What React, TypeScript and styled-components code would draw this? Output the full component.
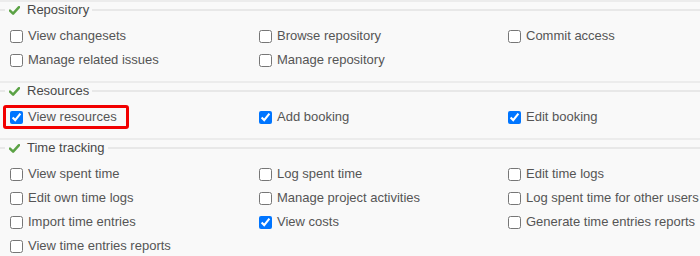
import { FC } from "react"
import styled, { createGlobalStyle } from "styled-components"

const GlobalStyle = createGlobalStyle`
  html, body {
    margin: 0;
    padding: 0;
    background: #f9f9f9;
  }
  body {
    font-family: "Liberation Sans", Arial, sans-serif;
    font-size: 13px;
    color: #555555;
  }
`

interface IPermission {
  label: string
  checked?: boolean
  highlight?: boolean
}

interface IGroup {
  title: string
  permissions: IPermission[]
}

const groups: IGroup[] = [
  {
    title: "Repository",
    permissions: [
      { label: "View changesets" },
      { label: "Browse repository" },
      { label: "Commit access" },
      { label: "Manage related issues" },
      { label: "Manage repository" },
    ],
  },
  {
    title: "Resources",
    permissions: [
      { label: "View resources", checked: true, highlight: true },
      { label: "Add booking", checked: true },
      { label: "Edit booking", checked: true },
    ],
  },
  {
    title: "Time tracking",
    permissions: [
      { label: "View spent time" },
      { label: "Log spent time" },
      { label: "Edit time logs" },
      { label: "Edit own time logs" },
      { label: "Manage project activities" },
      { label: "Log spent time for other users" },
      { label: "Import time entries" },
      { label: "View costs", checked: true },
      { label: "Generate time entries reports" },
      { label: "View time entries reports" },
    ],
  },
]

const Page = styled.div`
  border-top: 2px solid #ececec;
  width: 700px;
  overflow: hidden;
`

const Group = styled.fieldset`
  margin: 0;
  min-width: 0;
  border: 0;
  border-top: 2px solid #e8e8e8;
  border-bottom: 2px solid #ececec;
  padding: 6px 0 9px 10px;
`

const Legend = styled.legend`
  display: flex;
  align-items: center;
  gap: 7px;
  margin-left: -5px;
  padding: 0 3px 0 4px;
  line-height: 16px;
  color: #484848;
`

const Toggle = styled.svg`
  width: 11px;
  height: 9px;
  flex: none;
`

const Grid = styled.div`
  display: grid;
  grid-template-columns: repeat(3, 249px);
  grid-auto-rows: 24px;
`

const Label = styled.label<{ $highlight?: boolean }>`
  position: relative;
  justify-self: start;
  display: flex;
  align-items: center;
  gap: 5px;
  white-space: nowrap;
  line-height: 24px;

  &::after {
    content: "";
    display: ${({ $highlight }) => ($highlight ? "block" : "none")};
    position: absolute;
    left: -7px;
    right: -12px;
    top: 0;
    bottom: 0;
    border: 3px solid #f20000;
    border-radius: 3px;
    pointer-events: none;
  }
`

const Box = styled.input`
  margin: 0;
  width: 13px;
  height: 13px;
`

const Check: FC = () => (
  <Toggle viewBox="0 0 11 9">
    <path
      d="M1 4.6 L4.1 7.6 L10 1.2"
      fill="none"
      stroke="#5ba245"
      strokeWidth="2.5"
      strokeLinecap="round"
      strokeLinejoin="round"
    />
  </Toggle>
)

const App: FC = () => (
  <>
    <GlobalStyle />
    <Page>
      {groups.map((group) => (
        <Group key={group.title}>
          <Legend>
            <Check />
            {group.title}
          </Legend>
          <Grid>
            {group.permissions.map((p) => (
              <Label key={p.label} $highlight={p.highlight}>
                <Box type="checkbox" defaultChecked={p.checked} />
                {p.label}
              </Label>
            ))}
          </Grid>
        </Group>
      ))}
    </Page>
  </>
)

export default App
